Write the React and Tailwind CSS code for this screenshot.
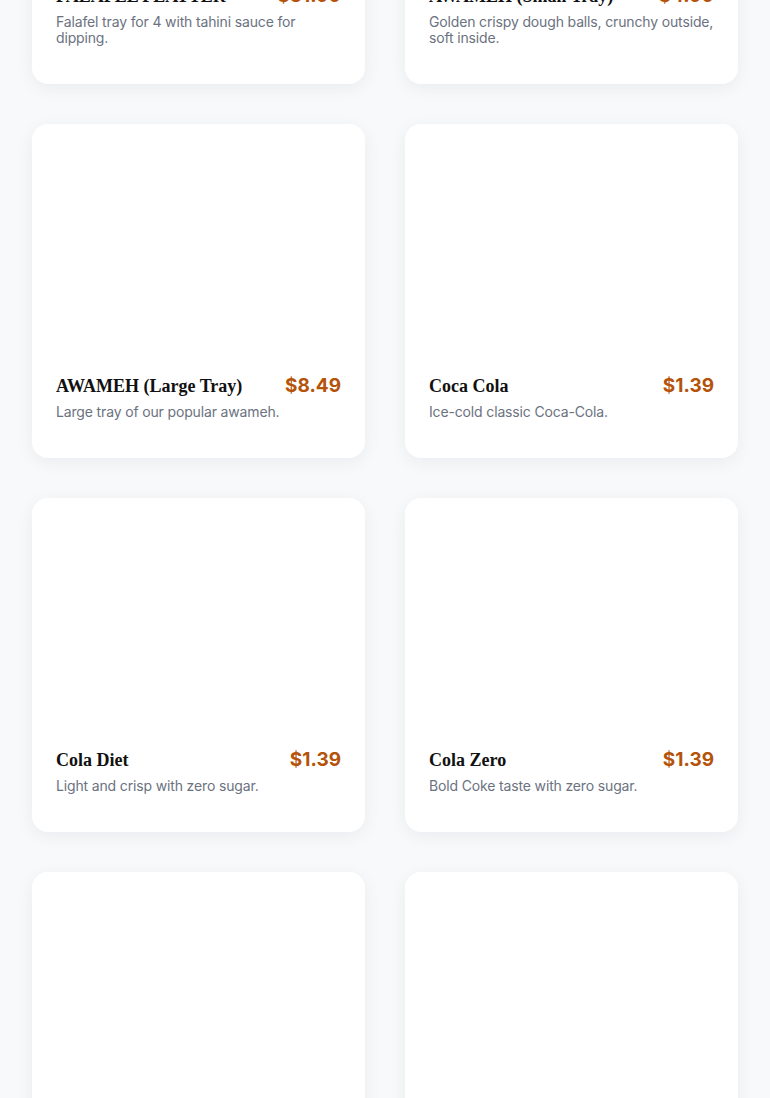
import React from "react";

const items = [
  { name: "FALAFEL PLATTER", price: "$31.99", desc: "Falafel tray for 4 with tahini sauce for dipping." },
  { name: "AWAMEH (Small Tray)", price: "$4.99", desc: "Golden crispy dough balls, crunchy outside, soft inside." },
  { name: "AWAMEH (Large Tray)", price: "$8.49", desc: "Large tray of our popular awameh." },
  { name: "Coca Cola", price: "$1.39", desc: "Ice-cold classic Coca-Cola." },
  { name: "Cola Diet", price: "$1.39", desc: "Light and crisp with zero sugar." },
  { name: "Cola Zero", price: "$1.39", desc: "Bold Coke taste with zero sugar." },
  { name: "Sprite", price: "$1.39", desc: "Refreshing lemon-lime soda." },
  { name: "Fanta", price: "$1.39", desc: "Bright and fruity orange soda." },
];

function Card({ item }) {
  return (
    <div className="bg-white rounded-2xl shadow-[0_4px_18px_rgba(15,23,42,0.06)] overflow-hidden flex flex-col">
      <div className="h-[224px] bg-white" />
      <div className="px-6 pt-6 pb-[38px] flex flex-col flex-1">
        <div className="flex items-center justify-between gap-4 h-7">
          <h3 className="text-lg font-bold text-[#111111] [font-family:'Liberation_Serif','DejaVu_Serif',serif] leading-7 whitespace-nowrap">
            {item.name}
          </h3>
          <span className="text-[19px] font-bold text-[#b45309] [font-family:Inter,'Liberation_Sans',sans-serif] leading-7">
            {item.price}
          </span>
        </div>
        <p className="mt-1 text-sm leading-4 tracking-[-0.15px] text-[#6b7280] [font-family:Inter,'Liberation_Sans',sans-serif]">
          {item.desc}
        </p>
      </div>
    </div>
  );
}

export default function App() {
  return (
    <div className="min-h-screen bg-[#f8f9fb] overflow-hidden h-[1098px]">
      <div className="px-8 mt-[-266px] grid grid-cols-2 gap-10">
        {items.map((it) => (
          <Card key={it.name} item={it} />
        ))}
      </div>
    </div>
  );
}
